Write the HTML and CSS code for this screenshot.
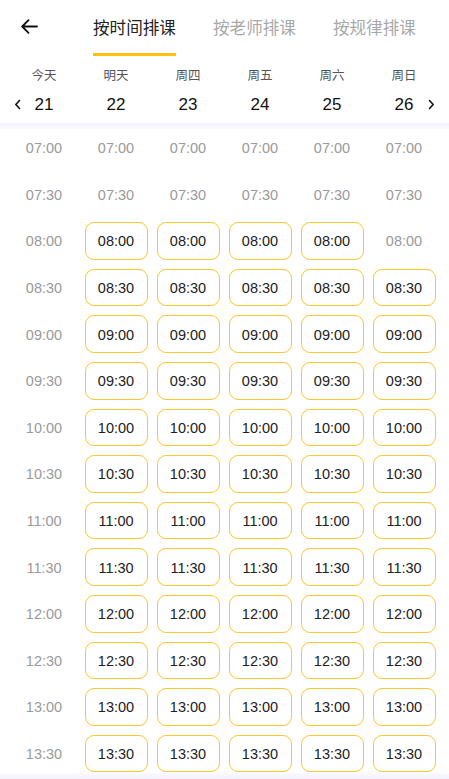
FILE: index.html
```html
<!DOCTYPE html>
<html lang="zh">
<head>
<meta charset="utf-8">
<link rel="stylesheet" href="styles.css">
</head>
<body>
<div class="page">
  <header class="topbar">
    <div class="back">
      <svg width="17" height="15" viewBox="0 0 17 15"><path d="M16 7.5H1.5M7.5 1.2L1.2 7.5l6.3 6.3" fill="none" stroke="#111" stroke-width="1.8" stroke-linecap="round" stroke-linejoin="round"/></svg>
    </div>
    <nav class="tabs">
      <div class="tab active">按时间排课</div>
      <div class="tab">按老师排课</div>
      <div class="tab">按规律排课</div>
    </nav>
  </header>
  <section class="days">
    <div class="day"><span class="dname">今天</span><span class="dnum">21</span></div>
    <div class="day"><span class="dname">明天</span><span class="dnum">22</span></div>
    <div class="day"><span class="dname">周四</span><span class="dnum">23</span></div>
    <div class="day"><span class="dname">周五</span><span class="dnum">24</span></div>
    <div class="day"><span class="dname">周六</span><span class="dnum">25</span></div>
    <div class="day"><span class="dname">周日</span><span class="dnum">26</span></div>
    <svg class="chev prev" width="7" height="11" viewBox="0 0 7 11"><path d="M5.5 1.5L1.8 5.5l3.7 4" fill="none" stroke="#111" stroke-width="1.6" stroke-linecap="round" stroke-linejoin="round"/></svg>
    <svg class="chev next" width="7" height="11" viewBox="0 0 7 11"><path d="M1.5 1.5l3.7 4-3.7 4" fill="none" stroke="#111" stroke-width="1.6" stroke-linecap="round" stroke-linejoin="round"/></svg>
  </section>
  <div class="shade"></div>
  <main class="grid" id="grid"></main>
  <div class="bottom-shade"></div>
</div>
<script>
  var times = ["07:00","07:30","08:00","08:30","09:00","09:30","10:00","10:30","11:00","11:30","12:00","12:30","13:00","13:30"];
  var grid = document.getElementById("grid");
  times.forEach(function (t, r) {
    for (var c = 0; c < 6; c++) {
      var avail = c > 0 && r >= 2 && !(r === 2 && c === 5);
      var d = document.createElement("div");
      d.className = "slot" + (avail ? " on" : "");
      d.textContent = t;
      grid.appendChild(d);
    }
  });
</script>
</body>
</html>
```
FILE: styles.css
```css
* { box-sizing: border-box; }
html, body { margin: 0; padding: 0; background: #fff; }
body {
  font-family: "Liberation Sans", "Noto Sans CJK SC", sans-serif;
  color: #111;
  overflow: hidden;
}
.page {
  width: 449px;
  height: 779px;
  display: flex;
  flex-direction: column;
  overflow: hidden;
  position: relative;
}
.topbar {
  height: 56px;
  display: flex;
  align-items: stretch;
  flex: none;
}
.back {
  width: 93px;
  padding-left: 21px;
  padding-top: 19px;
}
.tabs {
  display: flex;
  gap: 37px;
}
.tab {
  font-family: "Noto Sans CJK SC", sans-serif;
  font-size: 16.6px;
  color: #a8a8a8;
  line-height: 20px;
  padding-top: 17px;
  border-bottom: 3px solid transparent;
  white-space: nowrap;
}
.tab.active {
  color: #222;
  border-bottom-color: #fdc00f;
}
.days {
  position: relative;
  flex: none;
  height: 67px;
  display: grid;
  grid-template-columns: repeat(6, 72px);
  padding: 0 9px 0 8px;
}
.day {
  display: flex;
  flex-direction: column;
  align-items: center;
}
.dname {
  font-family: "Noto Sans CJK SC", sans-serif;
  font-size: 12.5px;
  color: #555;
  line-height: 16px;
  margin-top: 11px;
}
.dnum {
  font-size: 17px;
  color: #111;
  line-height: 20px;
  margin-top: 12px;
}
.chev {
  position: absolute;
  top: 43px;
}
.chev.prev { left: 14px; }
.chev.next { left: 428px; }
.shade {
  flex: none;
  height: 6px;
  background: linear-gradient(#f3f1fb, #fbfaff);
}
.grid {
  flex: 1;
  overflow: hidden;
  display: grid;
  grid-template-columns: repeat(6, 72px);
  grid-auto-rows: 37.6px;
  row-gap: 9px;
  padding: 0 9px 0 8px;
}
.slot {
  justify-self: center;
  width: 63px;
  height: 37.6px;
  display: flex;
  align-items: center;
  justify-content: center;
  padding-top: 1px;
  font-size: 14.5px;
  color: #9a9a9a;
  border: 1.5px solid transparent;
  border-radius: 9px;
}
.slot.on {
  color: #222;
  border-color: #fbc62e;
}
.bottom-shade {
  position: absolute;
  left: 0;
  right: 0;
  bottom: 0;
  height: 6px;
  background: linear-gradient(#fbfaff, #f3f1fb);
}
```
